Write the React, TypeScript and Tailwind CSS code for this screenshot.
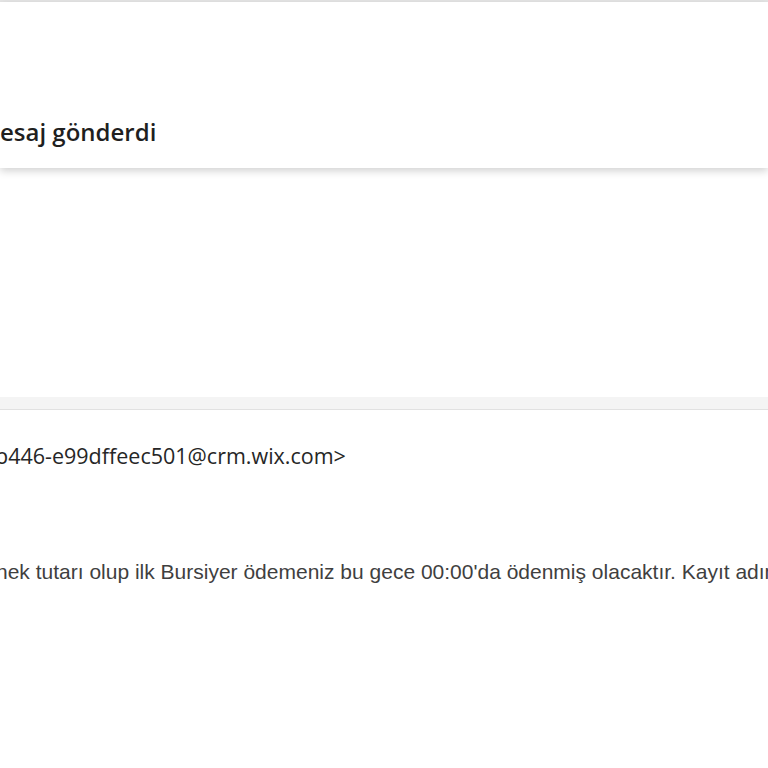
const App = () => {
	return (
		<div className="h-[768px] w-[768px] overflow-hidden bg-white">
			<div className="h-[2px] bg-[#e6e6e6]" />

			{/* header */}
			<div className="relative z-10 flex h-[166px] items-end bg-white pb-[20px] shadow-[0_3px_8px_rgba(0,0,0,0.18)]">
				<h2
					className="whitespace-nowrap text-[24px] font-semibold leading-[32px] text-[#1f1f1f]"
					style={{ fontFamily: '"Open Sans", "Noto Sans", sans-serif' }}>
					esaj gönderdi
				</h2>
			</div>

			<div className="h-[229px] bg-white" />

			<div className="h-[13px] border-b border-[#e1e1e1] bg-[#f4f4f4]" />

			{/* sender */}
			<div className="overflow-hidden pt-[31px]">
				<p
					className="-ml-[5px] whitespace-nowrap text-[21.5px] leading-[30px] text-[#262626]"
					style={{ fontFamily: '"Open Sans", "Noto Sans", sans-serif' }}>
					b446-e99dffeec501@crm.wix.com&gt;
				</p>
			</div>

			{/* body */}
			<div className="overflow-hidden pt-[88px]">
				<p
					className="-ml-[4px] whitespace-nowrap text-[21px] leading-[26px] text-[#3f3f3f]"
					style={{ fontFamily: '"Liberation Sans", Arial, sans-serif' }}>
					nek tutarı olup ilk Bursiyer ödemeniz bu gece 00:00'da ödenmiş olacaktır. Kayıt adımlarını
				</p>
			</div>
		</div>
	);
};

export default App;
